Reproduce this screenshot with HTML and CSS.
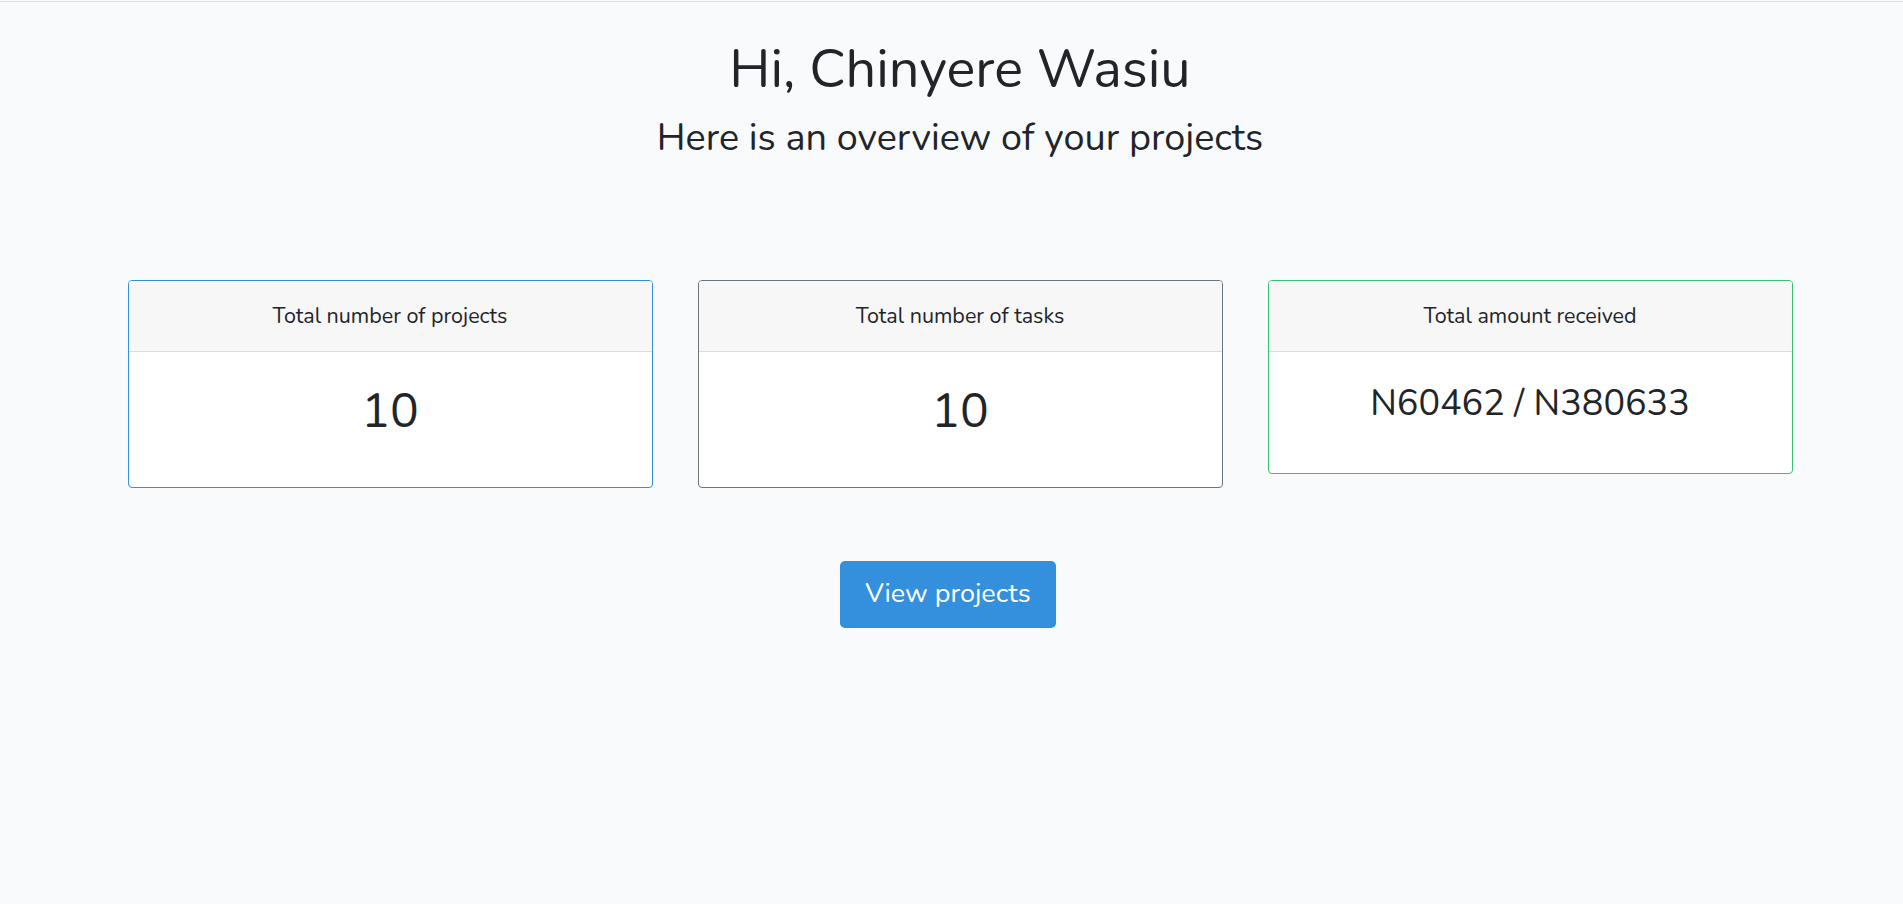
FILE: index.html
```html
<!DOCTYPE html>
<html lang="en">
<head>
<meta charset="utf-8">
<title>Dashboard</title>
<link rel="stylesheet" href="styles.css">
</head>
<body>
<div class="page">
  <div class="topbar"></div>
  <main class="main">
    <header class="intro">
      <h1 class="greeting">Hi, Chinyere Wasiu</h1>
      <h2 class="subtitle">Here is an overview of your projects</h2>
    </header>
    <section class="stats">
      <div class="card card-primary">
        <div class="card-header">Total number of projects</div>
        <div class="card-body"><div class="stat-big">10</div></div>
      </div>
      <div class="card card-secondary">
        <div class="card-header">Total number of tasks</div>
        <div class="card-body"><div class="stat-big">10</div></div>
      </div>
      <div class="card card-success">
        <div class="card-header">Total amount received</div>
        <div class="card-body"><div class="stat-amount">N60462 / N380633</div></div>
      </div>
    </section>
    <div class="actions">
      <a class="btn-primary" href="#">View projects</a>
    </div>
  </main>
</div>
</body>
</html>
```
FILE: styles.css
```css
html {
  overflow-x: hidden;
}
body {
  margin: 0;
  background: #f8fafc;
  color: #212529;
  font-family: "Nunito", "Lato", sans-serif;
  -webkit-font-smoothing: antialiased;
}
.page {
  width: 1920px;
  min-height: 904px;
}
.topbar {
  height: 1px;
  border-bottom: 1px solid #dfe1e4;
}
.main {
  display: flex;
  flex-direction: column;
  align-items: center;
}
.intro {
  margin-top: 35px;
  text-align: center;
}
.greeting {
  margin: 0;
  font-size: 54px;
  line-height: 64px;
  font-weight: 400;
}
.subtitle {
  margin: 14px 0 0;
  font-size: 37.8px;
  line-height: 46px;
  font-weight: 400;
}
.stats {
  margin-top: 119px;
  display: grid;
  grid-template-columns: repeat(3, 525px);
  column-gap: 45px;
  align-items: start;
}
.card {
  background: #fff;
  border: 1px solid rgba(0, 0, 0, 0.125);
  border-radius: 4px;
  overflow: hidden;
}
.card-primary { border-color: #3490dc; }
.card-secondary { border-color: #6c757d; }
.card-success { border-color: #38c172; }
.card-header {
  background: #f7f7f7;
  border-bottom: 1px solid #dcdcdc;
  padding: 22px 16px 22px;
  font-size: 21.5px;
  line-height: 26px;
  text-align: center;
}
.card-body {
  padding: 30px 20px 47px;
  text-align: center;
}
.stat-big {
  font-size: 48px;
  line-height: 58px;
}
.stat-amount {
  font-size: 36px;
  line-height: 44px;
}
.actions {
  margin-top: 73px;
  display: flex;
  justify-content: center;
  padding-right: 24px;
}
.btn-primary {
  display: block;
  width: 216px;
  box-sizing: border-box;
  padding: 16px 0 18px;
  background: #3490dc;
  color: #fff;
  border-radius: 5px;
  font-size: 27px;
  line-height: 33px;
  text-align: center;
  text-decoration: none;
}
```
